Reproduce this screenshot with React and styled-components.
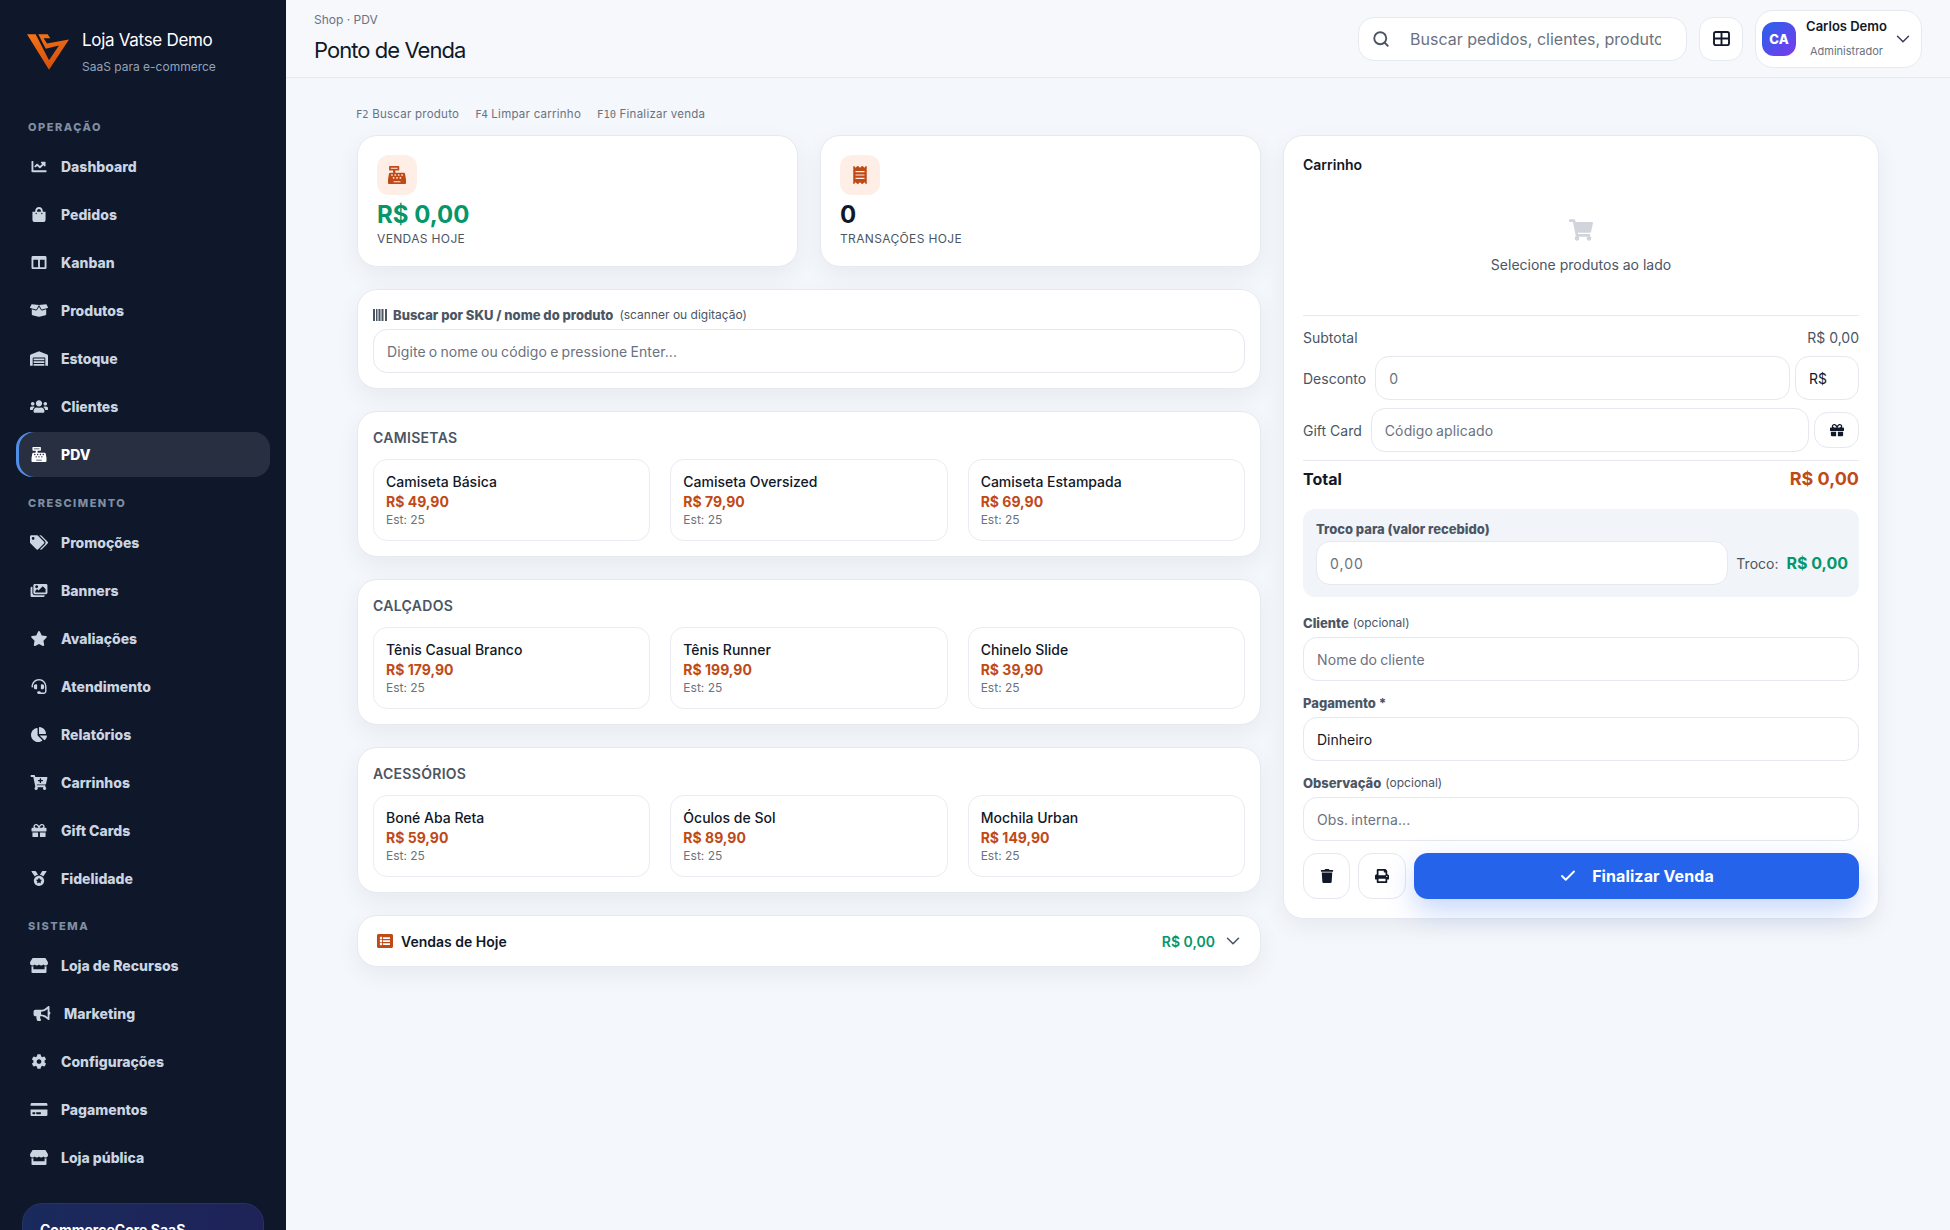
import React from 'react';
import styled, { createGlobalStyle } from 'styled-components';
import {
  FaChartLine, FaShoppingBag, FaColumns, FaBoxOpen, FaWarehouse, FaUsers, FaCashRegister,
  FaTags, FaImages, FaStar, FaHeadset, FaChartPie, FaCartPlus, FaGift, FaMedal, FaStore,
  FaBullhorn, FaCog, FaCreditCard, FaReceipt, FaShoppingCart, FaTrash, FaPrint,
  FaListAlt,
} from 'react-icons/fa';
import { Search, ChevronDown, Check } from 'lucide-react';

const accent = '#c04a17';

const GlobalStyle = createGlobalStyle`
  * { box-sizing: border-box; }
  html, body { margin: 0; height: 100%; }
  body {
    font-family: Inter, "Liberation Sans", sans-serif;
    background: #f4f7fb;
    color: #111827;
    overflow: hidden;
  }
`;

const Shell = styled.div`
  display: flex;
  height: 1230px;
  overflow: hidden;
`;

const Sidebar = styled.aside`
  width: 286px;
  flex: none;
  height: 1230px;
  overflow: hidden;
  background: #0f172a;
  padding: 0 16px;
`;

const Brand = styled.div`
  display: flex;
  align-items: flex-start;
  gap: 13px;
  height: 112px;
  padding: 29px 0 0 11px;
`;

const BrandLogo = styled.svg`
  flex: none;
  margin-top: 5px;
`;

const BrandText = styled.div`
  display: flex;
  flex-direction: column;
`;

const BrandName = styled.div`
  color: #fff;
  font-size: 17px;
  line-height: 22px;
  font-weight: 400;
  letter-spacing: -0.3px;
`;

const BrandSub = styled.div`
  color: #94a3b8;
  font-size: 12px;
  line-height: 16px;
  margin-top: 8px;
`;

const SectionGroup = styled.div`
  margin-top: ${({ $mt }) => $mt}px;
`;

const SectionLabel = styled.div`
  height: 30px;
  line-height: 30px;
  padding-left: 12px;
  margin-bottom: 2px;
  color: #7f8ea3;
  font-size: 11px;
  font-weight: 800;
  letter-spacing: 1.5px;
`;

const NavItem = styled.div`
  display: flex;
  align-items: center;
  height: 45px;
  margin-bottom: 3px;
  padding-left: ${({ $shift }) => ($shift ? 17 : 14)}px;
  gap: 13px;
  width: 254px;
  border-radius: 16px;
  color: ${({ $active }) => ($active ? '#fff' : '#cbd5e1')};
  background: ${({ $active }) => ($active ? '#272f41' : 'transparent')};
  box-shadow: ${({ $active }) => ($active ? 'inset 3px 0 0 #4f8fe8' : 'none')};
  font-size: 14px;
  font-weight: 800;
  svg { width: 18px; height: 15px; flex: none; }
`;

const PromoCard = styled.div`
  margin: 23px 6px 0;
  height: 120px;
  border-radius: 20px;
  padding: 17px 17px;
  background: linear-gradient(100deg, #1a2a5c, #1f2258);
  border: 1px solid #253263;
  color: #fff;
  font-size: 14px;
  font-weight: 700;
`;

const Main = styled.main`
  flex: 1;
  min-width: 0;
`;

const Header = styled.header`
  display: flex;
  align-items: center;
  justify-content: space-between;
  height: 78px;
  padding: 0 28px;
  border-bottom: 1px solid #e5e9ef;
  background: #f6f8fb;
`;

const HeaderTitles = styled.div`
  display: flex;
  flex-direction: column;
`;

const Crumb = styled.div`
  font-size: 12px;
  line-height: 16px;
  color: #6b7280;
  margin-top: -1px;
  margin-bottom: 8px;
`;

const PageTitle = styled.h1`
  margin: 0;
  font-size: 22px;
  line-height: 28px;
  font-weight: 400;
  letter-spacing: -0.95px;
  color: #111827;
`;

const HeaderTools = styled.div`
  display: flex;
  align-items: center;
  gap: 12px;
`;

const SearchBox = styled.div`
  display: flex;
  align-items: center;
  width: 329px;
  height: 44px;
  border: 1px solid #e6eaf0;
  border-radius: 16px;
  background: #fff;
  padding: 0 25px 0 13px;
  gap: 20px;
  color: #4b5563;
  overflow: hidden;
`;

const SearchText = styled.div`
  font-size: 16px;
  white-space: nowrap;
  overflow: hidden;
  color: #6b7280;
`;

const SquareButton = styled.div`
  display: flex;
  align-items: center;
  justify-content: center;
  width: 44px;
  height: 44px;
  border: 1px solid #e6eaf0;
  border-radius: 14px;
  background: #fff;
  color: #111827;
`;

const UserPill = styled.div`
  display: flex;
  align-items: center;
  width: 167px;
  height: 58px;
  border: 1px solid #e6eaf0;
  border-radius: 18px;
  background: #fff;
  padding: 0 7px 0 6px;
`;

const Avatar = styled.div`
  display: flex;
  align-items: center;
  justify-content: center;
  flex: none;
  width: 34px;
  height: 34px;
  border-radius: 12px;
  background: linear-gradient(135deg, #2563eb, #7c3aed);
  color: #fff;
  font-size: 13px;
  font-weight: 800;
`;

const UserText = styled.div`
  flex: 1;
  text-align: center;
  padding-left: 5px;
`;

const UserName = styled.div`
  font-size: 13px;
  line-height: 16px;
  font-weight: 600;
  margin-top: -2px;
  margin-bottom: 10px;
`;

const UserRole = styled.div`
  font-size: 11px;
  line-height: 14px;
  color: #6b7280;
`;

const Content = styled.div`
  width: 1522px;
  margin: 0 auto;
  padding-top: 28px;
`;

const Shortcuts = styled.div`
  display: flex;
  gap: 16px;
  height: 29px;
  margin-left: -1px;
  font-size: 11.5px;
  line-height: 16px;
  color: #6b7280;
  letter-spacing: 0.25px;
  code { font-family: "DejaVu Sans Mono", monospace; font-size: 10.5px; letter-spacing: 0; }
`;

const Columns = styled.div`
  display: grid;
  grid-template-columns: 904px 596px;
  gap: 22px;
  align-items: start;
`;

const LeftColumn = styled.div`
  display: flex;
  flex-direction: column;
  gap: 22px;
`;

const Card = styled.section`
  background: #fff;
  border: 1px solid #e6e9ef;
  border-radius: 20px;
  box-shadow: 0 8px 24px rgba(15, 23, 42, 0.06);
`;

const StatsRow = styled.div`
  display: grid;
  grid-template-columns: 1fr 1fr;
  gap: 22px;
`;

const StatCard = styled(Card)`
  height: 132px;
  padding: 19px 19px;
`;

const StatIcon = styled.div`
  display: flex;
  align-items: center;
  justify-content: center;
  width: 40px;
  height: 40px;
  border-radius: 12px;
  background: #ffeee5;
  color: ${accent};
  font-size: 18px;
`;

const StatValue = styled.div`
  font-size: 24px;
  line-height: 30px;
  margin-top: 5px;
  font-weight: 700;
  color: ${({ $green }) => ($green ? '#059669' : '#111827')};
`;

const StatLabel = styled.div`
  font-size: 12px;
  line-height: 16px;
  margin-top: 1px;
  color: #4b5563;
  letter-spacing: 0.35px;
`;

const SearchCard = styled(Card)`
  height: 100px;
  padding: 17px 15px;
`;

const FieldLabel = styled.div`
  display: flex;
  align-items: center;
  gap: ${({ $gap }) => $gap || 4}px;
  font-size: 13px;
  line-height: 16px;
  font-weight: 800;
  color: #4b5563;
  span { font-size: 12px; font-weight: 400; }
`;

const Input = styled.div`
  display: flex;
  align-items: center;
  flex: ${({ $grow }) => ($grow ? 1 : 'none')};
  height: 44px;
  min-width: 0;
  padding: 0 13px;
  background: #fff;
  border: 1px solid #e5e8ee;
  border-radius: 14px;
  font-size: 14px;
  letter-spacing: ${({ $tight, $num }) => ($tight ? '0.12px' : $num ? '1px' : 0)};
  word-spacing: ${({ $tight }) => ($tight ? '-1px' : 0)};
  color: ${({ $filled }) => ($filled ? '#111827' : '#6b7280')};
  width: ${({ $w }) => ($w ? `${$w}px` : 'auto')};
`;

const SearchInput = styled(Input)`
  margin-top: 6px;
`;

const CategoryCard = styled(Card)`
  height: 146px;
  padding: 16px 15px 0;
`;

const CategoryTitle = styled.div`
  font-size: 14px;
  line-height: 20px;
  font-weight: 600;
  letter-spacing: 0.3px;
  color: #4b5563;
  margin-bottom: 11px;
`;

const ProductGrid = styled.div`
  display: grid;
  grid-template-columns: repeat(3, 1fr);
  gap: 20px;
`;

const ProductCard = styled.div`
  height: 82px;
  padding: 12px;
  border: 1px solid #e9ecf1;
  border-radius: 14px;
`;

const ProductName = styled.div`
  font-size: 14px;
  line-height: 20px;
  font-weight: 500;
  color: #111827;
`;

const ProductPrice = styled.div`
  font-size: 14px;
  line-height: 20px;
  font-weight: 700;
  color: ${accent};
`;

const ProductStock = styled.div`
  font-size: 12px;
  line-height: 16px;
  color: #6b7280;
`;

const SalesCard = styled(Card)`
  display: flex;
  align-items: center;
  height: 52px;
  padding: 0 16px 0 19px;
  font-size: 14px;
  font-weight: 600;
  color: ${accent};
  gap: 8px;
`;

const SalesTitle = styled.div`
  flex: 1;
  color: #111827;
`;

const SalesValue = styled.div`
  color: #059669;
  margin-right: -1px;
`;

const CartCard = styled(Card)`
  height: 784px;
  padding: 19px;
`;

const CartTitle = styled.div`
  font-size: 14px;
  line-height: 20px;
  font-weight: 600;
`;

const CartEmpty = styled.div`
  display: flex;
  flex-direction: column;
  align-items: center;
  height: 141px;
  padding-top: 43px;
  border-bottom: 1px solid #e5e8ee;
  font-size: 14px;
  line-height: 20px;
  color: #4b5563;
  gap: 13px;
  svg { color: #d1d5db; font-size: 24px; }
`;

const SummaryLine = styled.div`
  display: flex;
  justify-content: space-between;
  align-items: center;
  height: 20px;
  margin-top: 11px;
  margin-bottom: 9px;
  font-size: 14px;
  color: #4b5563;
`;

const AdjustRow = styled.div`
  display: flex;
  align-items: center;
  gap: 5px;
  margin-bottom: 8px;
  font-size: 14px;
  color: #4b5563;
`;

const RowLabel = styled.div`
  margin-right: 4px;
  white-space: nowrap;
`;

const IconButton = styled.div`
  display: flex;
  align-items: center;
  justify-content: center;
  flex: none;
  width: ${({ $w }) => $w}px;
  height: ${({ $h }) => $h}px;
  background: #fff;
  border: 1px solid #e5e8ee;
  border-radius: 14px;
  color: #111827;
  font-size: 14px;
`;

const TotalLine = styled.div`
  display: flex;
  justify-content: space-between;
  align-items: center;
  height: 36px;
  border-top: 1px solid #e5e8ee;
  font-size: 16px;
  font-weight: 700;
  color: #111827;
  strong { font-size: 18px; color: ${accent}; font-weight: 700; }
`;

const ChangeBox = styled.div`
  margin-top: 13px;
  height: 88px;
  padding: 12px 11px 0 13px;
  border-radius: 12px;
  background: #f1f5f9;
`;

const ChangeRow = styled.div`
  display: flex;
  align-items: center;
  gap: 8px;
  margin-top: 4px;
  font-size: 14px;
  color: #4b5563;
  strong { font-size: 16px; color: #059669; font-weight: 700; }
`;

const FormField = styled.div`
  margin-top: ${({ $mt }) => $mt}px;
`;

const FormInput = styled(Input)`
  margin-top: 6px;
`;

const Actions = styled.div`
  display: flex;
  gap: 8px;
  margin-top: 12px;
`;

const FinishButton = styled.div`
  flex: 1;
  display: flex;
  align-items: center;
  justify-content: center;
  gap: 15px;
  height: 46px;
  border-radius: 14px;
  background: #2563eb;
  color: #fff;
  font-size: 16px;
  font-weight: 700;
  letter-spacing: 0.1px;
  box-shadow: 0 12px 28px rgba(37, 99, 235, 0.25);
`;

const sections = [
  {
    title: 'OPERAÇÃO',
    mt: 0,
    items: [
      ['Dashboard', FaChartLine], ['Pedidos', FaShoppingBag], ['Kanban', FaColumns], ['Produtos', FaBoxOpen],
      ['Estoque', FaWarehouse], ['Clientes', FaUsers], ['PDV', FaCashRegister, true],
    ],
  },
  {
    title: 'CRESCIMENTO',
    mt: 11,
    items: [
      ['Promoções', FaTags], ['Banners', FaImages], ['Avaliações', FaStar], ['Atendimento', FaHeadset],
      ['Relatórios', FaChartPie], ['Carrinhos', FaCartPlus], ['Gift Cards', FaGift], ['Fidelidade', FaMedal],
    ],
  },
  {
    title: 'SISTEMA',
    mt: 10,
    items: [
      ['Loja de Recursos', FaStore], ['Marketing', FaBullhorn, false, true], ['Configurações', FaCog],
      ['Pagamentos', FaCreditCard], ['Loja pública', FaStore],
    ],
  },
];

const categories = [
  { title: 'CAMISETAS', products: [['Camiseta Básica', '49,90'], ['Camiseta Oversized', '79,90'], ['Camiseta Estampada', '69,90']] },
  { title: 'CALÇADOS', products: [['Tênis Casual Branco', '179,90'], ['Tênis Runner', '199,90'], ['Chinelo Slide', '39,90']] },
  { title: 'ACESSÓRIOS', products: [['Boné Aba Reta', '59,90'], ['Óculos de Sol', '89,90'], ['Mochila Urban', '149,90']] },
];

const Logo = () => (
  <BrandLogo width="42" height="36" viewBox="22 30 126 107">
    <defs>
      <linearGradient id="logoFill" x1="0" y1="0" x2="0.3" y2="1">
        <stop offset="0" stopColor="#f97316" />
        <stop offset="1" stopColor="#d4520e" />
      </linearGradient>
    </defs>
    <path
      d="M22 30 L48 30 L88 108 L118 64 L78 74 L56 30 L84 30 L92 42 L72 42 L82 58 L148 46 L88 137 Z"
      fill="url(#logoFill)"
    />
  </BrandLogo>
);

const GridIcon = () => (
  <svg width="17" height="15" viewBox="0 0 18 16" fill="none" stroke="#111827" strokeWidth="2">
    <rect x="1" y="1" width="16" height="14" rx="2" />
    <path d="M1 8 H17 M9 1 V15" />
  </svg>
);

const BarcodeIcon = () => (
  <svg width="14" height="12" viewBox="0 0 14 12" fill="#4b5563">
    <rect x="0" width="2" height="12" />
    <rect x="3" width="1.5" height="12" />
    <rect x="5.5" width="2" height="12" />
    <rect x="8.5" width="2" height="12" />
    <rect x="12" width="2" height="12" />
  </svg>
);

const App = () => {
  return (
    <Shell>
      <GlobalStyle />
      <Sidebar>
        <Brand>
          <Logo />
          <BrandText>
            <BrandName>Loja Vatse Demo</BrandName>
            <BrandSub>SaaS para e-commerce</BrandSub>
          </BrandText>
        </Brand>
        {sections.map((section) => (
          <SectionGroup key={section.title} $mt={section.mt}>
            <SectionLabel>{section.title}</SectionLabel>
            {section.items.map(([label, Icon, active, shift]) => (
              <NavItem key={label} $active={active} $shift={shift}>
                <Icon />
                {label}
              </NavItem>
            ))}
          </SectionGroup>
        ))}
        <PromoCard>CommerceCore SaaS</PromoCard>
      </Sidebar>
      <Main>
        <Header>
          <HeaderTitles>
            <Crumb>Shop · PDV</Crumb>
            <PageTitle>Ponto de Venda</PageTitle>
          </HeaderTitles>
          <HeaderTools>
            <SearchBox>
              <Search size={18} strokeWidth={2.5} style={{ flex: 'none' }} />
              <SearchText>Buscar pedidos, clientes, produtos...</SearchText>
            </SearchBox>
            <SquareButton><GridIcon /></SquareButton>
            <UserPill>
              <Avatar>CA</Avatar>
              <UserText>
                <UserName>Carlos Demo</UserName>
                <UserRole>Administrador</UserRole>
              </UserText>
              <ChevronDown size={22} strokeWidth={1.6} color="#374151" />
            </UserPill>
          </HeaderTools>
        </Header>
        <Content>
          <Shortcuts>
            <div><code>F2</code> Buscar produto</div>
            <div><code>F4</code> Limpar carrinho</div>
            <div><code>F10</code> Finalizar venda</div>
          </Shortcuts>
          <Columns>
            <LeftColumn>
              <StatsRow>
                <StatCard>
                  <StatIcon><FaCashRegister /></StatIcon>
                  <StatValue $green>R$ 0,00</StatValue>
                  <StatLabel>VENDAS HOJE</StatLabel>
                </StatCard>
                <StatCard>
                  <StatIcon><FaReceipt /></StatIcon>
                  <StatValue>0</StatValue>
                  <StatLabel>TRANSAÇÕES HOJE</StatLabel>
                </StatCard>
              </StatsRow>
              <SearchCard>
                <FieldLabel $gap={6}>
                  <BarcodeIcon />
                  Buscar por SKU / nome do produto <span>(scanner ou digitação)</span>
                </FieldLabel>
                <SearchInput $tight>Digite o nome ou código e pressione Enter...</SearchInput>
              </SearchCard>
              {categories.map((category) => (
                <CategoryCard key={category.title}>
                  <CategoryTitle>{category.title}</CategoryTitle>
                  <ProductGrid>
                    {category.products.map(([name, price]) => (
                      <ProductCard key={name}>
                        <ProductName>{name}</ProductName>
                        <ProductPrice>R$ {price}</ProductPrice>
                        <ProductStock>Est: 25</ProductStock>
                      </ProductCard>
                    ))}
                  </ProductGrid>
                </CategoryCard>
              ))}
              <SalesCard>
                <FaListAlt size={16} />
                <SalesTitle>Vendas de Hoje</SalesTitle>
                <SalesValue>R$ 0,00</SalesValue>
                <ChevronDown size={22} strokeWidth={1.7} color="#4b5563" />
              </SalesCard>
            </LeftColumn>
            <CartCard>
              <CartTitle>Carrinho</CartTitle>
              <CartEmpty>
                <FaShoppingCart />
                Selecione produtos ao lado
              </CartEmpty>
              <SummaryLine>
                <span>Subtotal</span>
                <span>R$ 0,00</span>
              </SummaryLine>
              <AdjustRow>
                <RowLabel>Desconto</RowLabel>
                <Input $grow $num>0</Input>
                <Input $w={64} $filled>R$</Input>
              </AdjustRow>
              <AdjustRow>
                <RowLabel>Gift Card</RowLabel>
                <Input $grow $tight>Código aplicado</Input>
                <IconButton $w={45} $h={36}><FaGift /></IconButton>
              </AdjustRow>
              <TotalLine>
                <span>Total</span>
                <strong>R$ 0,00</strong>
              </TotalLine>
              <ChangeBox>
                <FieldLabel>Troco para (valor recebido)</FieldLabel>
                <ChangeRow>
                  <Input $grow $num>0,00</Input>
                  <span>Troco:</span>
                  <strong>R$ 0,00</strong>
                </ChangeRow>
              </ChangeBox>
              <FormField $mt={18}>
                <FieldLabel>Cliente <span>(opcional)</span></FieldLabel>
                <FormInput $tight>Nome do cliente</FormInput>
              </FormField>
              <FormField $mt={14}>
                <FieldLabel>Pagamento *</FieldLabel>
                <FormInput $filled>Dinheiro</FormInput>
              </FormField>
              <FormField $mt={14}>
                <FieldLabel>Observação <span>(opcional)</span></FieldLabel>
                <FormInput $tight>Obs. interna...</FormInput>
              </FormField>
              <Actions>
                <IconButton $w={47} $h={46}><FaTrash /></IconButton>
                <IconButton $w={48} $h={46}><FaPrint /></IconButton>
                <FinishButton>
                  <Check size={18} strokeWidth={2.5} />
                  Finalizar Venda
                </FinishButton>
              </Actions>
            </CartCard>
          </Columns>
        </Content>
      </Main>
    </Shell>
  );
};

export default App;
